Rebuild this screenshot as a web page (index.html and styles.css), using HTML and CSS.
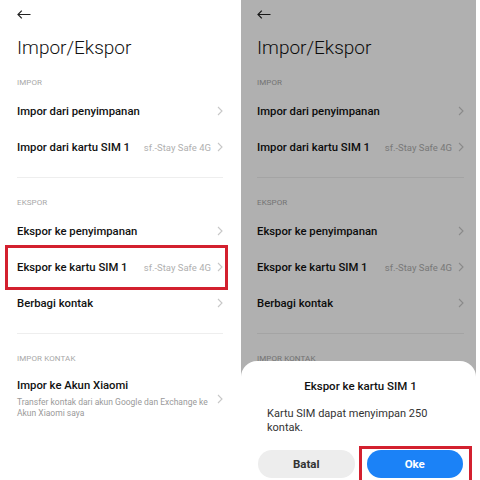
FILE: index.html
```html
<!DOCTYPE html>
<html>
<head>
<meta charset="utf-8">
<link rel="stylesheet" href="styles.css">
</head>
<body>
<div class="pair">
  <div class="screen left">
    <div class="back"><svg width="14" height="9" viewBox="0 0 14 9"><path d="M13.5 4.5H1M4.8 0.7L1 4.5l3.8 3.8" fill="none" stroke="#222" stroke-width="1.2"/></svg></div>
    <div class="title">Impor/Ekspor</div>
    <div class="label">IMPOR</div>
    <div class="row"><span class="name">Impor dari penyimpanan</span><span class="chev"><svg width="6" height="10" viewBox="0 0 6 10"><path d="M1 1l4 4-4 4" fill="none" stroke="#c8c8c8" stroke-width="1.1"/></svg></span></div>
    <div class="row"><span class="name">Impor dari kartu SIM 1</span><span class="val">sf.-Stay Safe 4G</span><span class="chev"><svg width="6" height="10" viewBox="0 0 6 10"><path d="M1 1l4 4-4 4" fill="none" stroke="#c8c8c8" stroke-width="1.1"/></svg></span></div>
    <div class="divider"></div>
    <div class="label">EKSPOR</div>
    <div class="row"><span class="name">Ekspor ke penyimpanan</span><span class="chev"><svg width="6" height="10" viewBox="0 0 6 10"><path d="M1 1l4 4-4 4" fill="none" stroke="#c8c8c8" stroke-width="1.1"/></svg></span></div>
    <div class="row marked"><span class="name">Ekspor ke kartu SIM 1</span><span class="val">sf.-Stay Safe 4G</span><span class="chev"><svg width="6" height="10" viewBox="0 0 6 10"><path d="M1 1l4 4-4 4" fill="none" stroke="#c8c8c8" stroke-width="1.1"/></svg></span><span class="redbox"></span></div>
    <div class="row"><span class="name">Berbagi kontak</span><span class="chev"><svg width="6" height="10" viewBox="0 0 6 10"><path d="M1 1l4 4-4 4" fill="none" stroke="#c8c8c8" stroke-width="1.1"/></svg></span></div>
    <div class="divider"></div>
    <div class="label">IMPOR KONTAK</div>
    <div class="row tall"><div class="stack"><span class="name">Impor ke Akun Xiaomi</span><span class="sub">Transfer kontak dari akun Google dan Exchange ke Akun Xiaomi saya</span></div><span class="chev"><svg width="6" height="10" viewBox="0 0 6 10"><path d="M1 1l4 4-4 4" fill="none" stroke="#c8c8c8" stroke-width="1.1"/></svg></span></div>
  </div>

  <div class="screen right">
    <div class="back"><svg width="14" height="9" viewBox="0 0 14 9"><path d="M13.5 4.5H1M4.8 0.7L1 4.5l3.8 3.8" fill="none" stroke="#222" stroke-width="1.2"/></svg></div>
    <div class="title">Impor/Ekspor</div>
    <div class="label">IMPOR</div>
    <div class="row"><span class="name">Impor dari penyimpanan</span><span class="chev"><svg width="6" height="10" viewBox="0 0 6 10"><path d="M1 1l4 4-4 4" fill="none" stroke="#c8c8c8" stroke-width="1.1"/></svg></span></div>
    <div class="row"><span class="name">Impor dari kartu SIM 1</span><span class="val">sf.-Stay Safe 4G</span><span class="chev"><svg width="6" height="10" viewBox="0 0 6 10"><path d="M1 1l4 4-4 4" fill="none" stroke="#c8c8c8" stroke-width="1.1"/></svg></span></div>
    <div class="divider"></div>
    <div class="label">EKSPOR</div>
    <div class="row"><span class="name">Ekspor ke penyimpanan</span><span class="chev"><svg width="6" height="10" viewBox="0 0 6 10"><path d="M1 1l4 4-4 4" fill="none" stroke="#c8c8c8" stroke-width="1.1"/></svg></span></div>
    <div class="row"><span class="name">Ekspor ke kartu SIM 1</span><span class="val">sf.-Stay Safe 4G</span><span class="chev"><svg width="6" height="10" viewBox="0 0 6 10"><path d="M1 1l4 4-4 4" fill="none" stroke="#c8c8c8" stroke-width="1.1"/></svg></span></div>
    <div class="row"><span class="name">Berbagi kontak</span><span class="chev"><svg width="6" height="10" viewBox="0 0 6 10"><path d="M1 1l4 4-4 4" fill="none" stroke="#c8c8c8" stroke-width="1.1"/></svg></span></div>
    <div class="divider"></div>
    <div class="label">IMPOR KONTAK</div>
    <div class="dim"></div>
    <div class="dialog">
      <div class="d-title">Ekspor ke kartu SIM 1</div>
      <div class="d-body">Kartu SIM dapat menyimpan 250 kontak.</div>
      <div class="d-buttons">
        <button class="btn cancel">Batal</button>
        <button class="btn ok">Oke<span class="redbox2"></span></button>
      </div>
    </div>
  </div>
</div>
</body>
</html>
```

FILE: styles.css
```css
* { box-sizing: border-box; }
html, body { margin: 0; padding: 0; background: #fff; }
body { width: 480px; height: 480px; overflow: hidden; font-family: Roboto, "Noto Sans", sans-serif; color: #1a1a1a; }
.pair { display: flex; gap: 1px; height: 480px; }
.screen { position: relative; height: 480px; overflow: hidden; background: #fff; padding: 0 17px; display: flex; flex-direction: column; }
.screen.left { width: 240px; }
.screen.right { width: 235px; padding: 0 12px 0 16px; }
.back { height: 27px; display: flex; align-items: center; padding-top: 1px; }
.back svg { display: block; }
.title { font-size: 19px; font-weight: 300; line-height: 26px; height: 46px; padding-top: 8px; color: #111; }
.label { font-size: 8px; color: #a8a8a8; height: 20px; line-height: 20px; letter-spacing: 0.1px; }
.row { position: relative; height: 36px; display: flex; align-items: center; }
.name { font-size: 11.3px; font-weight: 500; color: #111; flex: 1; white-space: nowrap; }
.val { font-size: 9.5px; color: #b0b0b0; margin-right: 6px; white-space: nowrap; }
.chev { display: flex; align-items: center; width: 6px; }
.chev svg { display: block; }
.divider { height: 1px; background: #eeeeee; margin: 12px 0 15px; }
.row.tall { height: auto; padding-top: 10px; align-items: center; }
.stack { display: flex; flex-direction: column; flex: 1; }
.sub { font-size: 8.5px; line-height: 10.5px; color: #9a9a9a; margin-top: 5px; padding-right: 0; }
.redbox { position: absolute; top: -4px; bottom: -5px; left: -12px; right: -5px; border: 3px solid #d3202f; }
.dim { position: absolute; inset: 0; background: rgba(0,0,0,0.31); }
.dialog { position: absolute; left: 0; right: 0; top: 361px; bottom: -20px; background: #fff; border-radius: 16px 16px 0 0; display: flex; flex-direction: column; padding: 0 13px 0 17px; }
.d-title { text-align: center; font-size: 11.5px; font-weight: 500; color: #111; margin-top: 18px; line-height: 14px; }
.d-body { font-size: 11px; line-height: 14px; color: #333; margin: 14px 0 0 9px; padding-right: 20px; }
.d-buttons { display: flex; gap: 12px; margin-top: 15px; }
.btn { flex: 1; height: 28px; border: none; border-radius: 14px; font-family: Roboto, "Noto Sans", sans-serif; font-size: 11.5px; font-weight: 700; position: relative; padding: 0; }
.btn.cancel { background: #ededed; color: #333; }
.btn.ok { background: #1b82f7; color: #fff; }
.redbox2 { position: absolute; top: -4px; left: -8px; right: -9px; bottom: -8px; border: 3px solid #d3202f; }
```
